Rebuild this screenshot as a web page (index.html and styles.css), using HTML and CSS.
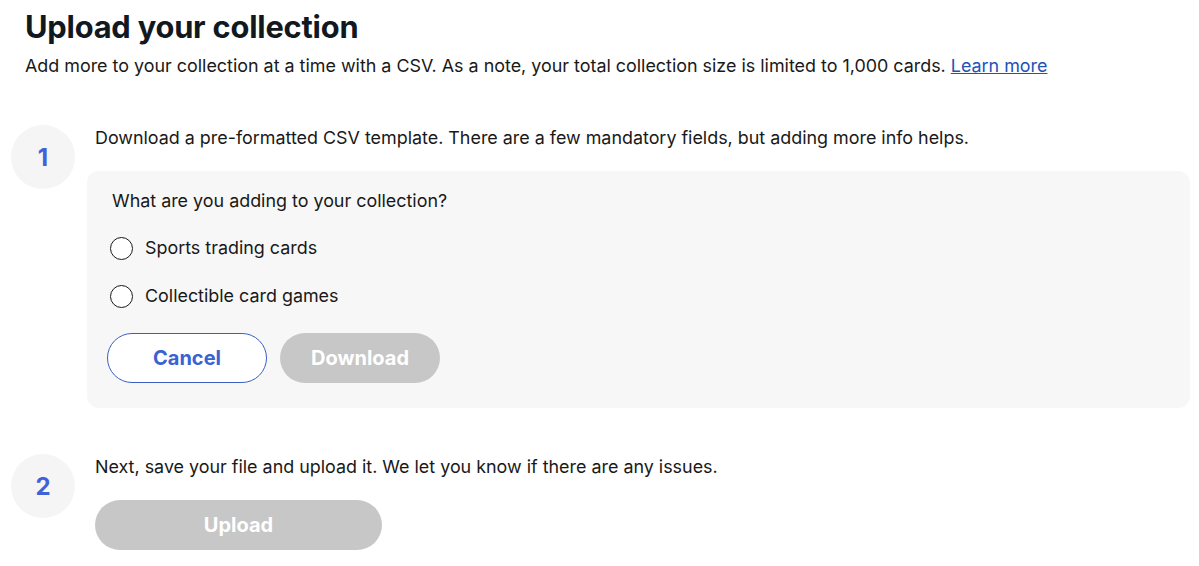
FILE: index.html
```html
<!DOCTYPE html>
<html lang="en">
<head>
<meta charset="utf-8">
<title>Upload your collection</title>
<link rel="stylesheet" href="styles.css">
</head>
<body>
<main class="page">
  <h1 class="title">Upload your collection</h1>
  <p class="intro">Add more to your collection at a time with a CSV. As a note, your total collection size is limited to 1,000 cards. <a href="#" class="link">Learn more</a></p>

  <section class="step step-one">
    <div class="step-num">1</div>
    <div class="step-body">
      <p class="step-text">Download a pre-formatted CSV template. There are a few mandatory fields, but adding more info helps.</p>
      <div class="panel">
        <p class="question">What are you adding to your collection?</p>
        <label class="radio-row"><span class="radio"></span><span class="radio-label">Sports trading cards</span></label>
        <label class="radio-row"><span class="radio"></span><span class="radio-label">Collectible card games</span></label>
        <div class="actions">
          <button class="btn btn-outline">Cancel</button>
          <button class="btn btn-disabled">Download</button>
        </div>
      </div>
    </div>
  </section>

  <section class="step step-two">
    <div class="step-num">2</div>
    <div class="step-body">
      <p class="step-text">Next, save your file and upload it. We let you know if there are any issues.</p>
      <button class="btn btn-disabled btn-wide">Upload</button>
    </div>
  </section>
</main>
</body>
</html>
```
FILE: styles.css
```css
* { box-sizing: border-box; }
html, body { margin: 0; padding: 0; background: #fff; }
body {
  font-family: Inter, "Noto Sans", "Liberation Sans", sans-serif;
  color: #191919;
}
.page { padding: 9px 9px 0 25px; }
.title {
  margin: 0;
  font-size: 30.8px;
  line-height: 36px;
  font-weight: 700;
  letter-spacing: -0.2px;
  color: #111820;
}
.intro {
  margin: 9px 0 0;
  font-size: 17.9px;
  line-height: 24px;
}
.link { color: #2252b8; text-decoration: underline; }
.step { display: flex; margin-left: -14px; }
.step-one { margin-top: 47px; }
.step-two { margin-top: 46px; }
.step-num {
  flex: none;
  width: 64px; height: 64px;
  border-radius: 50%;
  background: #f5f5f5;
  color: #3f63d6;
  font-weight: 700;
  font-size: 24px;
  display: flex; align-items: center; justify-content: center;
  margin-right: 20px;
}
.step-body { flex: 1; display: flex; flex-direction: column; align-items: flex-start; }
.step-text { margin: 0; font-size: 17.9px; line-height: 24px; }
.step-one .step-text { margin-top: 1px; }
.step-two .step-text { margin-top: 1px; }
.panel {
  margin: 21px 0 0 -8px;
  align-self: stretch;
  background: #f7f7f7;
  border-radius: 12px;
  padding: 18px 20px 25px 20px;
}
.question { margin: 0 0 0 5px; font-size: 17.9px; line-height: 24px; }
.radio-row { display: flex; align-items: center; margin-top: 23px; gap: 12px; font-size: 17.9px; line-height: 24px; }
.radio-row + .radio-row { margin-top: 24px; }
.radio {
  width: 23px; height: 23px; border-radius: 50%;
  border: 1.5px solid #191919; background: #fff; margin-left: 3px;
}
.actions { display: flex; gap: 13px; margin-top: 25px; }
.btn {
  font-family: inherit;
  height: 50px; width: 160px;
  border-radius: 25px;
  font-size: 20px; font-weight: 700;
  border: 1px solid transparent;
}
.btn-outline { background: #fff; border-color: #3a5fc4; color: #3b62d2; }
.btn-disabled { background: #c7c7c7; color: #fff; }
.btn-wide { width: 287px; margin-top: 21px; }
```
